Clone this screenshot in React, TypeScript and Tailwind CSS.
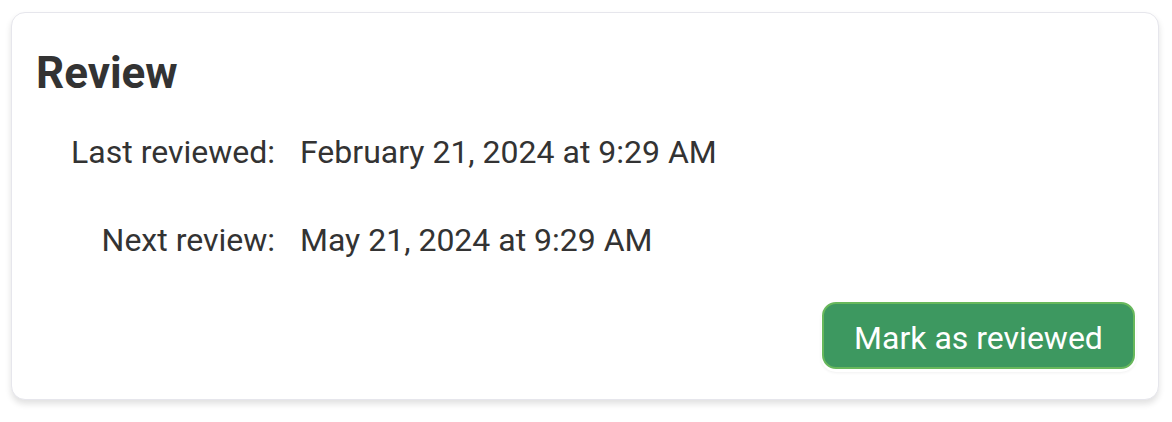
export default function App() {
  return (
    <div className="min-h-screen bg-white p-[11px] pt-[12px]" style={{ fontFamily: "Roboto, 'Noto Sans', sans-serif" }}>
      <div className="w-[1148px] h-[388px] rounded-[14px] border border-[#e6e6ec] bg-white px-[24px] pt-[34px] shadow-[0_4px_6px_rgba(0,0,0,0.12)] flex flex-col">
        <h2 className="text-[44px] leading-[52px] font-bold text-[#333333]">Review</h2>
        <div className="mt-[31px] grid grid-cols-[239px_1fr] gap-x-[25px] gap-y-[44px] text-[32px] leading-[44px] text-[#333333]">
          <div className="text-right">Last reviewed:</div>
          <div>February 21, 2024 at 9:29 AM</div>
          <div className="text-right">Next review:</div>
          <div>May 21, 2024 at 9:29 AM</div>
        </div>
        <div className="mt-[40px] flex justify-end">
          <button className="-mr-[1px] h-[67px] w-[313px] rounded-[14px] border-2 border-[#68b85c] bg-[#3d9860] pt-[4px] text-[32px] text-white shadow-[0_2px_0_1px_#ffffff,0_3px_3px_1px_rgba(0,0,0,0.06)]">
            Mark as reviewed
          </button>
        </div>
      </div>
    </div>
  );
}
